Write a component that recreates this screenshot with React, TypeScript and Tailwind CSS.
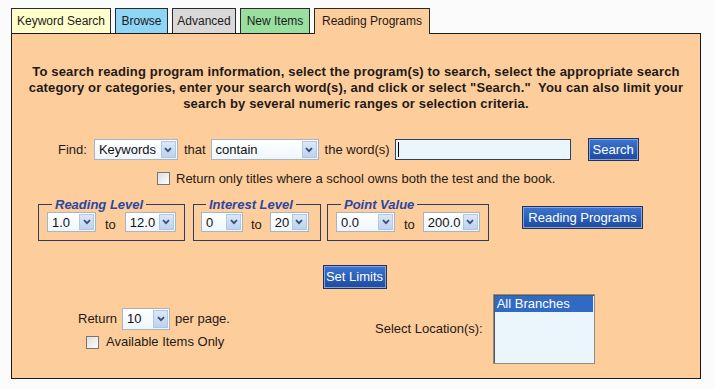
import React from "react";

const font = "font-['Liberation_Sans',Arial,sans-serif]";

const Chevron: React.FC = () => (
    <svg width="8" height="6" viewBox="0 0 8 6">
        <path d="M1 1.2 L4 4.2 L7 1.2" fill="none" stroke="#3d4f75" strokeWidth="1.9" />
    </svg>
);

interface FakeSelectProps {
    value: string;
    width: string;
    height?: string;
}

const FakeSelect: React.FC<FakeSelectProps> = ({ value, width, height = "h-[21px]" }) => (
    <div
        className={`${width} ${height} flex items-stretch border border-[#a7b3c6] bg-gradient-to-b from-white to-[#eef6fd] p-[1px]`}
    >
        <span className="flex-1 pl-[3px] leading-none flex items-center text-[13px] text-[#111]">
            {value}
        </span>
        <span className="w-[15px] flex items-center justify-center border border-[#b3c6e2] bg-gradient-to-b from-[#dbe8f8] to-[#bcd2ef]">
            <Chevron />
        </span>
    </div>
);

const BlueButton: React.FC<{ label: string; className: string }> = ({ label, className }) => (
    <button
        className={`${className} flex items-center justify-center border border-[#22325a] bg-gradient-to-b from-[#3d75d2] to-[#1c4a9e] text-[13px] text-white shadow-[inset_0_0_0_1px_#86a4dc] leading-none`}
    >
        {label}
    </button>
);

const CheckBox: React.FC = () => (
    <span className="w-[13px] h-[13px] border border-[#767676] bg-gradient-to-br from-[#dcdcdc] to-white inline-block" />
);

const tabs = [
    { label: "Keyword Search", w: "w-[100px]", bg: "bg-[#ffffcc]" },
    { label: "Browse", w: "w-[53px]", bg: "bg-[#8fd6f6]" },
    { label: "Advanced", w: "w-[64px]", bg: "bg-[#d9d9d9]" },
    { label: "New Items", w: "w-[70px]", bg: "bg-[#98dfa0]" },
];

export default function App() {
    return (
        <div className={`${font} w-[715px] h-[389px] bg-[#fbfbfb] pt-[8px] pl-[11px] text-[#1e1a18]`}>
            {/* tabs */}
            <div className="flex gap-[4px] text-[12px]">
                {tabs.map((t) => (
                    <div
                        key={t.label}
                        className={`${t.w} ${t.bg} h-[25px] border border-b-0 border-[#2a2a2a] flex items-center justify-center`}
                    >
                        {t.label}
                    </div>
                ))}
                <div className="w-[116px] h-[26px] -mb-[1px] relative z-10 bg-[#fdcd9b] border border-b-0 border-[#2a2a2a] flex items-center justify-center pb-[1px]">
                    Reading Programs
                </div>
            </div>

            {/* panel */}
            <div className="w-[690px] h-[346px] border border-[#1a1a1a] bg-[#fdcd9b] flex flex-col text-[13px]">
                <p className="mt-[30px] text-center text-[13px] font-bold leading-[16px] whitespace-nowrap tracking-[0.16px]">
                    To search reading program information, select the program(s) to search, select the appropriate search
                    <br />
                    category or categories, enter your search word(s), and click or select "Search."&nbsp; You can also limit your
                    <br />
                    search by several numeric ranges or selection criteria.
                </p>

                {/* find row */}
                <div className="mt-[26px] pl-[46px] flex items-center h-[23px]">
                    <span>Find:</span>
                    <div className="ml-[7px]">
                        <FakeSelect value="Keywords" width="w-[84px]" />
                    </div>
                    <span className="ml-[6px]">that</span>
                    <div className="ml-[5px]">
                        <FakeSelect value="contain" width="w-[108px]" />
                    </div>
                    <span className="ml-[6px]">the word(s)</span>
                    <div className="ml-[5px] w-[176px] h-[21px] border border-[#2a3f6e] bg-[#eaf6fc] flex items-center pl-[2px]">
                        <span className="w-[1px] h-[15px] bg-black" />
                    </div>
                    <BlueButton label="Search" className="ml-[17px] w-[51px] h-[23px]" />
                </div>

                {/* school checkbox */}
                <div className="mt-[9px] pl-[145px] flex items-center gap-[6px] h-[17px]">
                    <CheckBox />
                    <span>Return only titles where a school owns both the test and the book.</span>
                </div>

                {/* ranges */}
                <div className="mt-[10px] pl-[26px] flex items-start">
                    <fieldset className="w-[147px] border border-[#2e3b63] pl-[8px] pb-[5px]">
                        <legend className="ml-[5px] px-[3px] font-bold italic text-[#2b46a3] leading-[15px]">
                            Reading Level
                        </legend>
                        <div className="flex items-center -mt-[2px]">
                            <FakeSelect value="1.0" width="w-[49px]" height="h-[20px]" />
                            <span className="ml-[9px] mt-[5px]">to</span>
                            <div className="ml-[9px]">
                                <FakeSelect value="12.0" width="w-[51px]" height="h-[20px]" />
                            </div>
                        </div>
                    </fieldset>
                    <fieldset className="ml-[8px] w-[128px] border border-[#2e3b63] pl-[7px] pb-[5px]">
                        <legend className="ml-[5px] px-[3px] font-bold italic text-[#2b46a3] leading-[15px]">
                            Interest Level
                        </legend>
                        <div className="flex items-center -mt-[2px]">
                            <FakeSelect value="0" width="w-[42px]" height="h-[20px]" />
                            <span className="ml-[8px] mt-[5px]">to</span>
                            <div className="ml-[8px]">
                                <FakeSelect value="20" width="w-[39px]" height="h-[20px]" />
                            </div>
                        </div>
                    </fieldset>
                    <fieldset className="ml-[6px] w-[162px] border border-[#2e3b63] pl-[8px] pb-[5px]">
                        <legend className="ml-[5px] px-[3px] font-bold italic text-[#2b46a3] leading-[15px]">
                            Point Value
                        </legend>
                        <div className="flex items-center -mt-[2px]">
                            <FakeSelect value="0.0" width="w-[59px]" height="h-[20px]" />
                            <span className="ml-[9px] mt-[5px]">to</span>
                            <div className="ml-[8px]">
                                <FakeSelect value="200.0" width="w-[57px]" height="h-[20px]" />
                            </div>
                        </div>
                    </fieldset>
                    <BlueButton label="Reading Programs" className="ml-[33px] mt-[9px] w-[121px] h-[23px]" />
                </div>

                {/* set limits */}
                <div className="mt-[24px] flex justify-center">
                    <BlueButton label="Set Limits" className="w-[64px] h-[24px] -ml-[3px]" />
                </div>

                {/* bottom */}
                <div className="mt-[5px] flex items-start">
                    <div className="pl-[66px] w-[363px] pt-[14px]">
                        <div className="flex items-center h-[22px]">
                            <span>Return</span>
                            <div className="ml-[5px]">
                                <FakeSelect value="10" width="w-[48px]" height="h-[22px]" />
                            </div>
                            <span className="ml-[5px]">per page.</span>
                        </div>
                        <div className="mt-[5px] ml-[8px] flex items-center gap-[7px] h-[15px]">
                            <CheckBox />
                            <span>Available Items Only</span>
                        </div>
                    </div>
                    <div className="flex items-center">
                        <span>Select Location(s):</span>
                        <div className="ml-[10px] w-[102px] h-[70px] border border-[#8c8c8c] bg-[#eaf6fc] p-[1px] shadow-[inset_1px_1px_0_#555]">
                            <div className="h-[16px] bg-[#316ac5] text-white leading-[16px] pl-[2px]">All Branches</div>
                        </div>
                    </div>
                </div>
            </div>
        </div>
    );
}
